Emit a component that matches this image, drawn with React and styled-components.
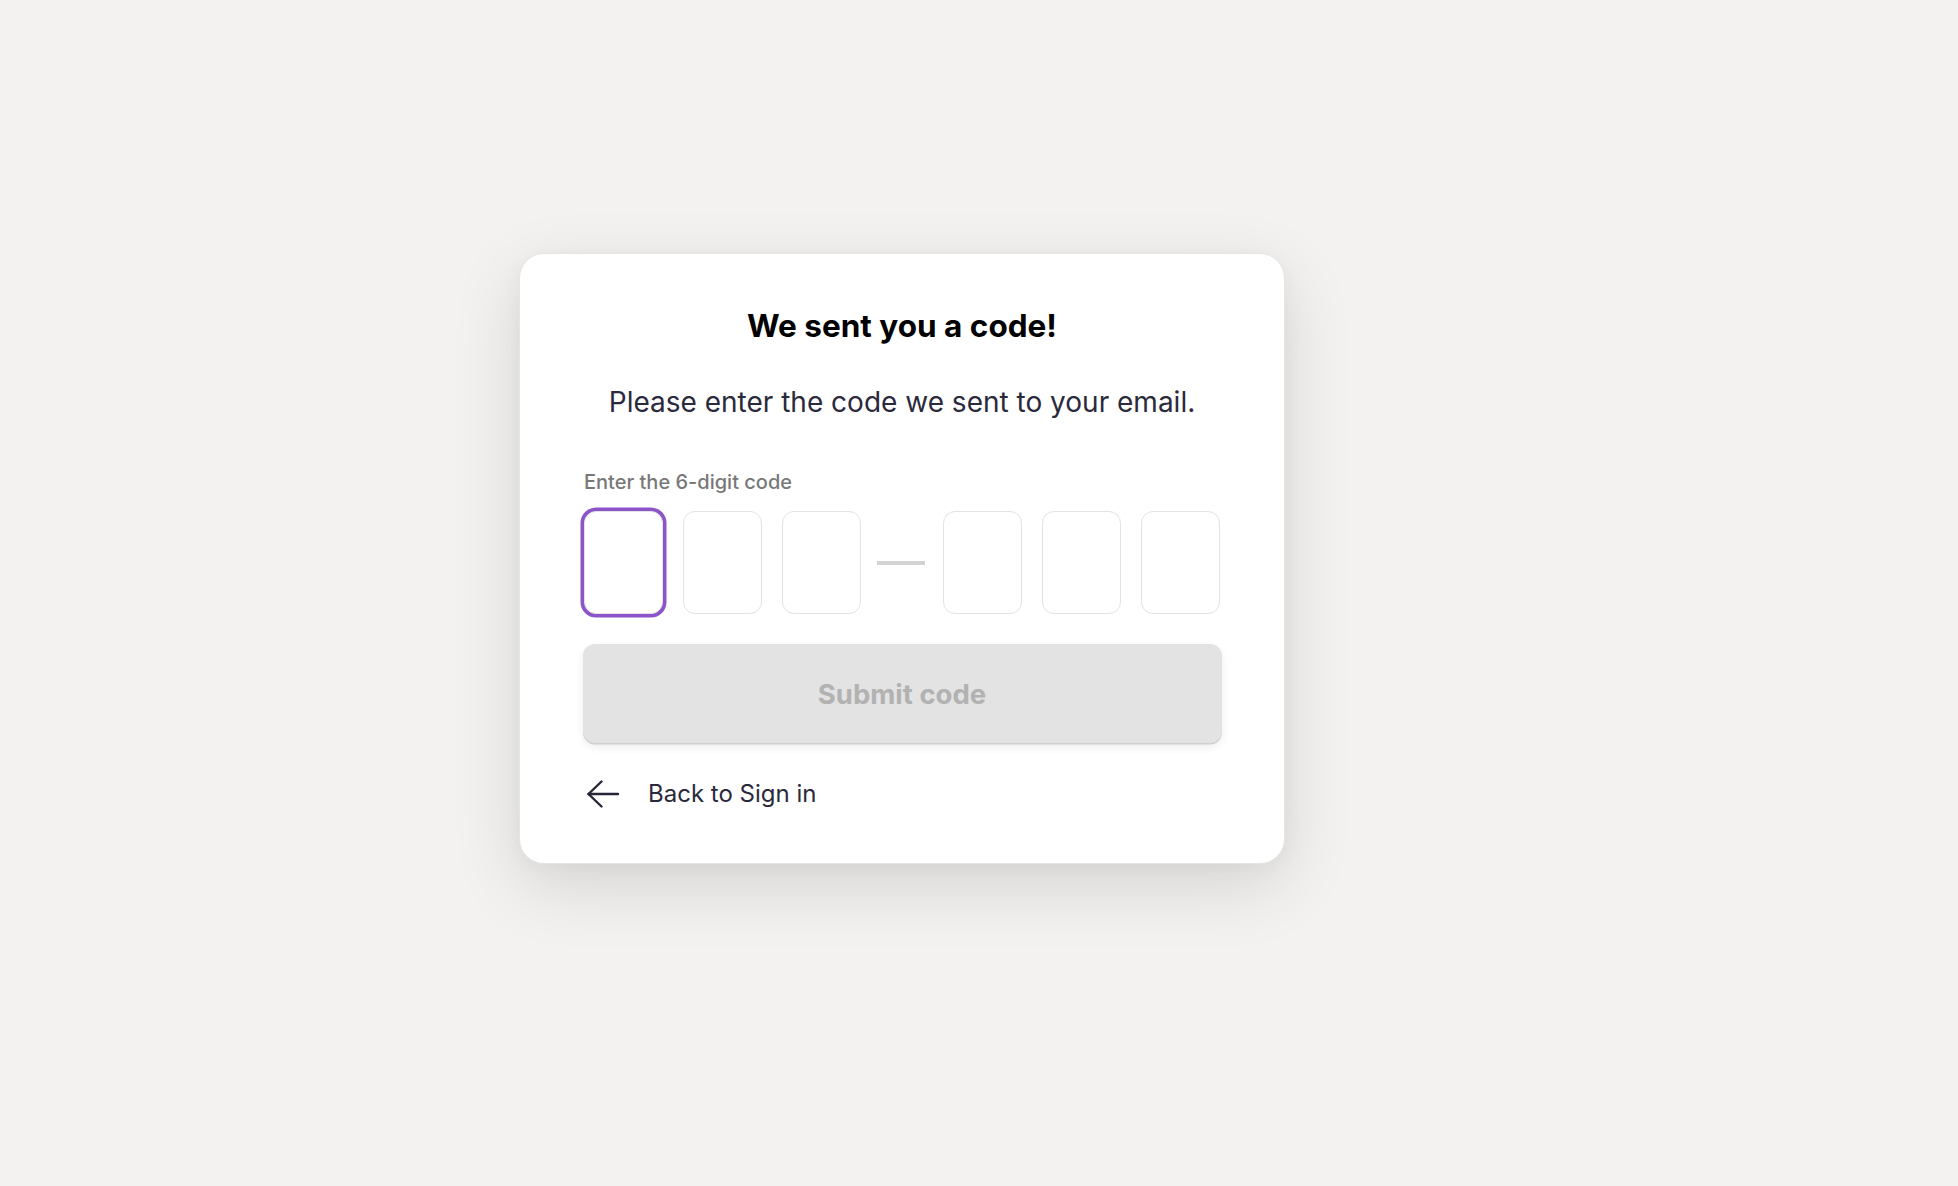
import React from 'react';
import styled, { createGlobalStyle } from 'styled-components';

const GlobalStyle = createGlobalStyle`
  html, body {
    margin: 0;
    background: #f3f2f0;
    font-family: Inter, "Noto Sans", "Liberation Sans", sans-serif;
  }
  * { box-sizing: border-box; }
`;

const Page = styled.main`
  min-height: 100vh;
  padding: 253px 0 0 519px;
`;

const Card = styled.section`
  width: 766px;
  background: #fff;
  border: 1px solid #e6e5e3;
  border-radius: 25px;
  padding: 53px 64px 55px;
  display: flex;
  flex-direction: column;
  box-shadow: 0 22px 70px rgba(0, 0, 0, 0.12), 0 4px 20px rgba(0, 0, 0, 0.04);
`;

const Title = styled.h1`
  margin: 0;
  font-size: 31.5px;
  line-height: 38px;
  font-weight: 700;
  color: #000;
  text-align: center;
`;

const Lead = styled.p`
  margin: 41px 0 0;
  font-size: 28px;
  line-height: 33px;
  color: #2a2a3c;
  text-align: center;
`;

const Label = styled.label`
  margin: 51px 0 0;
  font-size: 20px;
  line-height: 24px;
  font-weight: 500;
  color: #787878;
`;

const CodeRow = styled.div`
  margin-top: 17px;
  display: flex;
  align-items: center;
  justify-content: space-between;
`;

const Group = styled.div`
  display: flex;
  gap: 20px;
`;

const DigitBox = styled.input`
  width: 79px;
  height: 103px;
  border: 1.5px solid #e2e2e7;
  border-radius: 12px;
  background: #fff;
  outline: none;
  padding: 0;
  text-align: center;
  font: 600 36px Inter, sans-serif;
  box-shadow: ${(p) => (p.$active ? '0 0 0 3.5px #8c54c9' : 'none')};
`;

const Dash = styled.span`
  width: 48px;
  height: 4px;
  margin-right: 2px;
  background: #d3d3d3;
`;

const SubmitButton = styled.button`
  margin: 30px -1.5px 0;
  height: 99px;
  border: none;
  border-radius: 12px;
  background: #e3e3e3;
  color: #b2b2b2;
  font: 700 27.5px Inter, "Noto Sans", sans-serif;
  box-shadow: 0 1.5px 0 #cfcfcf, 0 4px 10px rgba(0, 0, 0, 0.07);
  cursor: not-allowed;
`;

const BackLink = styled.a`
  margin-top: 36px;
  display: flex;
  align-items: center;
  gap: 28px;
  padding-left: 2px;
  font-size: 24px;
  line-height: 29px;
  color: #2a2a3c;
  text-decoration: none;
  cursor: pointer;
`;

const ArrowLeft = () => (
  <svg width="34" height="28" viewBox="0 0 34 28" fill="none" stroke="#262637" strokeWidth="2.4" strokeLinecap="round" strokeLinejoin="round">
    <path d="M32 14H2.5" />
    <path d="M15.5 1.5L2.5 14l13 12.5" />
  </svg>
);

const App = () => {
  return (
    <Page>
      <GlobalStyle />
      <Card>
        <Title>We sent you a code!</Title>
        <Lead>Please enter the code we sent to your email.</Lead>
        <Label>Enter the 6-digit code</Label>
        <CodeRow>
          <Group>
            <DigitBox $active aria-label="Digit 1" />
            <DigitBox aria-label="Digit 2" />
            <DigitBox aria-label="Digit 3" />
          </Group>
          <Dash />
          <Group>
            <DigitBox aria-label="Digit 4" />
            <DigitBox aria-label="Digit 5" />
            <DigitBox aria-label="Digit 6" />
          </Group>
        </CodeRow>
        <SubmitButton disabled>Submit code</SubmitButton>
        <BackLink>
          <ArrowLeft />
          Back to Sign in
        </BackLink>
      </Card>
    </Page>
  );
};

export default App;
